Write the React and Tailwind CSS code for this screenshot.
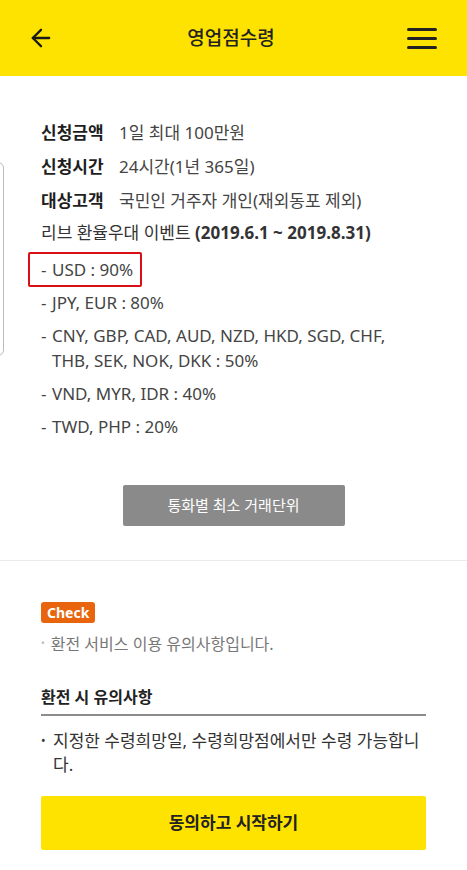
import { ArrowLeft } from 'lucide-react';

const rates = [
  ['USD : 90%'],
  ['JPY, EUR : 80%'],
  ['CNY, GBP, CAD, AUD, NZD, HKD, SGD, CHF,', 'THB, SEK, NOK, DKK : 50%'],
  ['VND, MYR, IDR : 40%'],
  ['TWD, PHP : 20%'],
];

function InfoRow({ label, value }) {
  return (
    <div className="flex h-[34px] items-center">
      <span className="w-[78px] font-bold text-[#1e1e1e]">{label}</span>
      <span className="text-[#444]">{value}</span>
    </div>
  );
}

export default function App() {
  return (
    <div
      className="relative min-h-[870px] w-[467px] overflow-hidden bg-white text-[17px]"
      style={{ fontFamily: '"Noto Sans", "Noto Sans CJK KR", sans-serif' }}
    >
      <header className="flex h-[76px] items-center justify-between bg-[#ffe300] pl-[27px] pr-[30px]">
        <ArrowLeft className="h-[28px] w-[28px] text-[#1a1a1a]" strokeWidth={2} />
        <h1 className="text-[19px] font-medium text-[#222]">영업점수령</h1>
        <div className="flex w-[30px] flex-col gap-[6px]">
          <span className="h-[3px] rounded bg-[#222]" />
          <span className="h-[3px] rounded bg-[#222]" />
          <span className="h-[3px] rounded bg-[#222]" />
        </div>
      </header>

      {/* peeking card on the left edge */}
      <div className="absolute left-[-20px] top-[162px] h-[194px] w-[24px] rounded-[6px] border border-[#bbb]" />

      <section className="px-[41px] pt-[40px]">
        <InfoRow label="신청금액" value="1일 최대 100만원" />
        <InfoRow label="신청시간" value="24시간(1년 365일)" />
        <InfoRow label="대상고객" value="국민인 거주자 개인(재외동포 제외)" />
        <div className="flex h-[30px] items-center text-[#333]">
          리브 환율우대 이벤트&nbsp;<span className="font-bold">(2019.6.1 ~ 2019.8.31)</span>
        </div>
        <ul className="mt-[5px] text-[17px] text-[#444]">
          {rates.map((lines, i) => (
            <li key={i} className="flex py-[4px] leading-[25px]">
              <span className="w-[11px]">-</span>
              <span className={i === 0 ? 'relative' : ''}>
                {lines.map((l, j) => (
                  <div key={j}>{l}</div>
                ))}
                {i === 0 && (
                  <span className="absolute bottom-[-5px] left-[-24px] right-[-9px] top-[-5px] rounded-[2px] border-2 border-[#d90f16]" />
                )}
              </span>
            </li>
          ))}
        </ul>
        <div className="flex justify-center pb-[34px] pt-[42px]">
          <button className="h-[41px] w-[222px] rounded-[2px] bg-[#8a8a8a] text-[15px] text-white">
            통화별 최소 거래단위
          </button>
        </div>
      </section>

      <div className="h-px bg-[#ebebeb]" />

      <section className="px-[41px] pt-[38px]">
        <span className="inline-block rounded-[3px] bg-[#e8650e] px-[6px] text-[14px] font-bold leading-[21px] text-white">
          Check
        </span>
        <p className="mt-[7px] flex items-center text-[16px] text-[#777]">
          <span className="mr-[6px] text-[10px] text-[#bbb]">•</span>환전 서비스 이용 유의사항입니다.
        </p>
        <h2 className="mt-[29px] border-b-2 border-[#8c8c8c] pb-[5px] text-[16px] font-bold text-[#222]">
          환전 시 유의사항
        </h2>
        <div className="mt-[13px] flex text-[17px] leading-[24px] text-[#333]">
          <span className="w-[12px] shrink-0 text-[12px]">•</span>
          <p>지정한 수령희망일, 수령희망점에서만 수령 가능합니다.</p>
        </div>
        <button className="mt-[19px] h-[54px] w-full rounded-[2px] bg-[#ffe300] text-[17px] font-bold text-[#222]">
          동의하고 시작하기
        </button>
      </section>
    </div>
  );
}
